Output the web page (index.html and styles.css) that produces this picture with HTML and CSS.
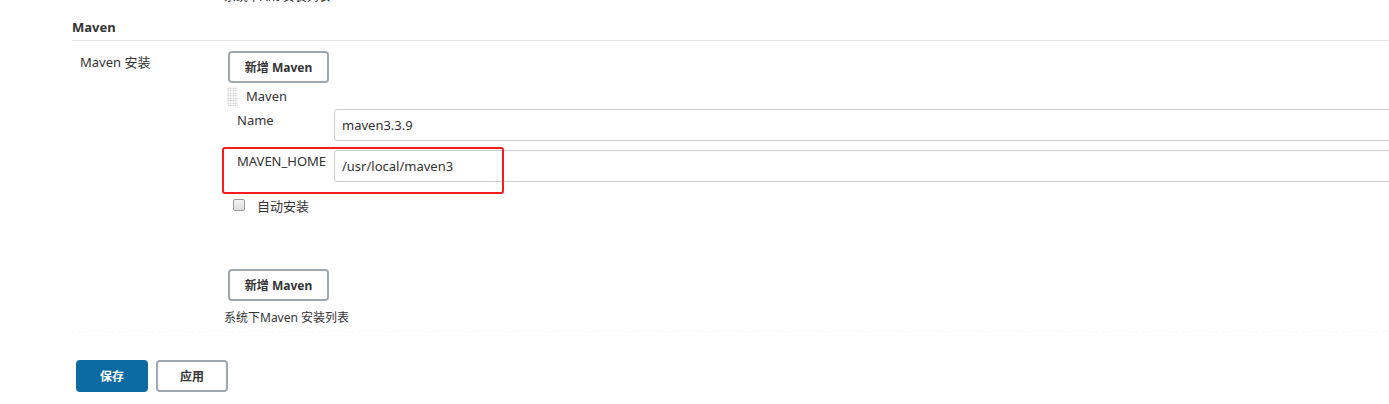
FILE: index.html
```html
<!DOCTYPE html>
<html lang="zh-CN">
<head>
<meta charset="utf-8">
<title>Maven</title>
<link rel="stylesheet" href="styles.css">
</head>
<body>
<div class="page">
  <div class="prev-desc">系统下Ant 安装列表</div>
  <div class="section-title">Maven</div>
  <div class="row">
    <div class="row-label">Maven 安装</div>
    <div class="row-body">
      <button class="btn add">新增 Maven</button>
      <div class="repeat">
        <div class="repeat-head"><span class="handle"></span><span>Maven</span></div>
        <div class="field">
          <label class="field-label">Name</label>
          <input class="field-input" type="text" value="maven3.3.9">
        </div>
        <div class="field field-marked">
          <label class="field-label">MAVEN_HOME</label>
          <input class="field-input" type="text" value="/usr/local/maven3">
          <span class="mark"></span>
        </div>
        <div class="check"><span class="box"></span><span>自动安装</span></div>
      </div>
      <button class="btn add add-bottom">新增 Maven</button>
      <div class="desc">系统下Maven 安装列表</div>
    </div>
  </div>
  <div class="divider"></div>
  <div class="actions">
    <button class="btn primary">保存</button>
    <button class="btn secondary">应用</button>
  </div>
</div>
</body>
</html>
```

FILE: styles.css
```css
html, body {
  margin: 0;
  padding: 0;
  overflow: hidden;
  background: #fff;
}
body {
  font-family: "Noto Sans", "Noto Sans CJK SC", sans-serif;
  font-size: 13px;
  color: #333;
  width: 1389px;
  height: 404px;
}
.page {
  padding-left: 72px;
}
.prev-desc {
  margin-top: -11px;
  margin-left: 152px;
  font-size: 12px;
  line-height: 16px;
}
.section-title {
  margin-top: 13px;
  font-weight: bold;
  font-size: 13px;
  line-height: 18px;
  padding-bottom: 4px;
  border-bottom: 1px solid #e2e2e2;
}
.row {
  display: flex;
}
.row-label {
  width: 144px;
  padding-left: 8px;
  padding-top: 12px;
  line-height: 18px;
  flex-shrink: 0;
}
.row-body {
  display: flex;
  flex-direction: column;
  align-items: flex-start;
}
.btn {
  font-family: "Noto Sans", "Noto Sans CJK SC", sans-serif;
  font-weight: bold;
  font-size: 12px;
  color: #333;
  background: #fff;
  border: 2px solid #9ea8b1;
  border-radius: 4px;
  height: 32px;
  padding: 0;
  cursor: pointer;
}
.add {
  width: 101px;
  margin-top: 10px;
  margin-left: 4px;
}
.repeat {
  display: flex;
  flex-direction: column;
}
.repeat-head {
  display: flex;
  align-items: center;
  margin-top: 3px;
  height: 20px;
  line-height: 20px;
}
.handle {
  width: 11px;
  height: 19px;
  margin-left: 3px;
  margin-right: 8px;
  background-image: radial-gradient(circle, #b5b5b5 0.7px, transparent 0.9px);
  background-size: 2.5px 2.5px;
}
.field {
  position: relative;
  display: flex;
  align-items: flex-start;
  margin-top: 3px;
}
.field-marked {
  margin-top: 9px;
}
.field-label {
  width: 97px;
  padding-left: 13px;
  padding-top: 2px;
  line-height: 18px;
  flex-shrink: 0;
}
.field-input {
  box-sizing: border-box;
  width: 1100px;
  height: 32px;
  border: 1px solid #ccc;
  border-radius: 3px;
  padding: 0 7px;
  font-family: "Noto Sans", "Noto Sans CJK SC", sans-serif;
  font-size: 13px;
  color: #333;
  background: #fff;
}
.mark {
  position: absolute;
  left: -2px;
  top: -3px;
  width: 278px;
  height: 43px;
  border: 2px solid #f21d1d;
  border-radius: 3px;
  pointer-events: none;
}
.check {
  display: flex;
  align-items: center;
  margin-top: 14px;
  line-height: 20px;
}
.box {
  box-sizing: border-box;
  width: 12px;
  height: 12px;
  margin-left: 9px;
  margin-right: 12px;
  margin-top: -3px;
  border: 1px solid #9a9a9a;
  border-radius: 2px;
  background: linear-gradient(#f4f4f4, #dcdcdc);
}
.add-bottom {
  margin-top: 53px;
}
.desc {
  margin-top: 9px;
  font-size: 12px;
  line-height: 16px;
}
.divider {
  margin-top: 5px;
  border-top: 1px dashed #f7f7f7;
  margin-left: 0;
}
.actions {
  display: flex;
  gap: 8px;
  margin-top: 28px;
  margin-left: 4px;
}
.primary {
  width: 72px;
  background: #0c6aa3;
  border-color: #0c6aa3;
  color: #fff;
}
.secondary {
  width: 72px;
}
```
